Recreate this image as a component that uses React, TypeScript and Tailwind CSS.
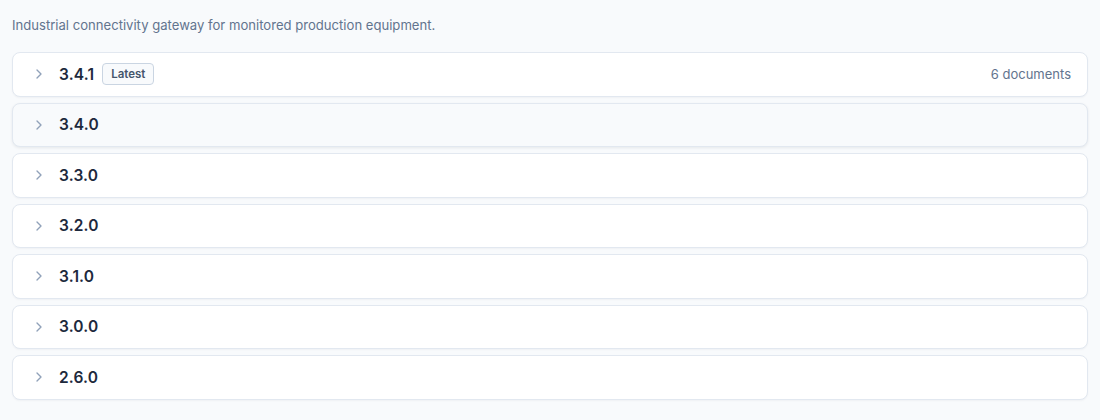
import { ChevronRight } from 'lucide-react';

interface Release {
  version: string;
  latest?: boolean;
  documents?: number;
  hovered?: boolean;
}

const releases: Release[] = [
  { version: '3.4.1', latest: true, documents: 6 },
  { version: '3.4.0', hovered: true },
  { version: '3.3.0' },
  { version: '3.2.0' },
  { version: '3.1.0' },
  { version: '3.0.0' },
  { version: '2.6.0' },
];

function ReleaseRow({ release }: { release: Release }) {
  return (
    <div
      className={
        release.hovered
          ? 'flex h-[44.5px] items-center rounded-lg border border-slate-200 bg-slate-50 pl-[18px] pr-4 shadow-[0_1px_3px_rgba(15,23,42,0.08)]'
          : 'flex h-[44.5px] items-center rounded-lg border border-slate-200 bg-white pl-[18px] pr-4 shadow-[0_1px_2px_rgba(15,23,42,0.04)]'
      }
    >
      <ChevronRight className="h-4 w-4 text-slate-400" strokeWidth={2} />
      <span className="ml-[12px] text-[15.5px] font-semibold tracking-[0.01em] text-slate-800">
        {release.version}
      </span>
      {release.latest && (
        <span className="ml-[8px] rounded border border-slate-300 bg-slate-50 px-[8px] py-[2px] text-[11.5px] font-semibold leading-[16px] text-slate-600">
          Latest
        </span>
      )}
      {release.documents !== undefined && (
        <span className="ml-auto text-[13px] text-slate-500">{release.documents} documents</span>
      )}
    </div>
  );
}

export default function App() {
  return (
    <div className="min-h-[420px] bg-slate-50 px-3 pt-[16px] font-['Inter',sans-serif]">
      <p className="text-[13.1px] leading-[18px] text-slate-500">
        Industrial connectivity gateway for monitored production equipment.
      </p>
      <div className="mt-[18px] flex flex-col gap-[6px]">
        {releases.map((r) => (
          <ReleaseRow key={r.version} release={r} />
        ))}
      </div>
    </div>
  );
}
